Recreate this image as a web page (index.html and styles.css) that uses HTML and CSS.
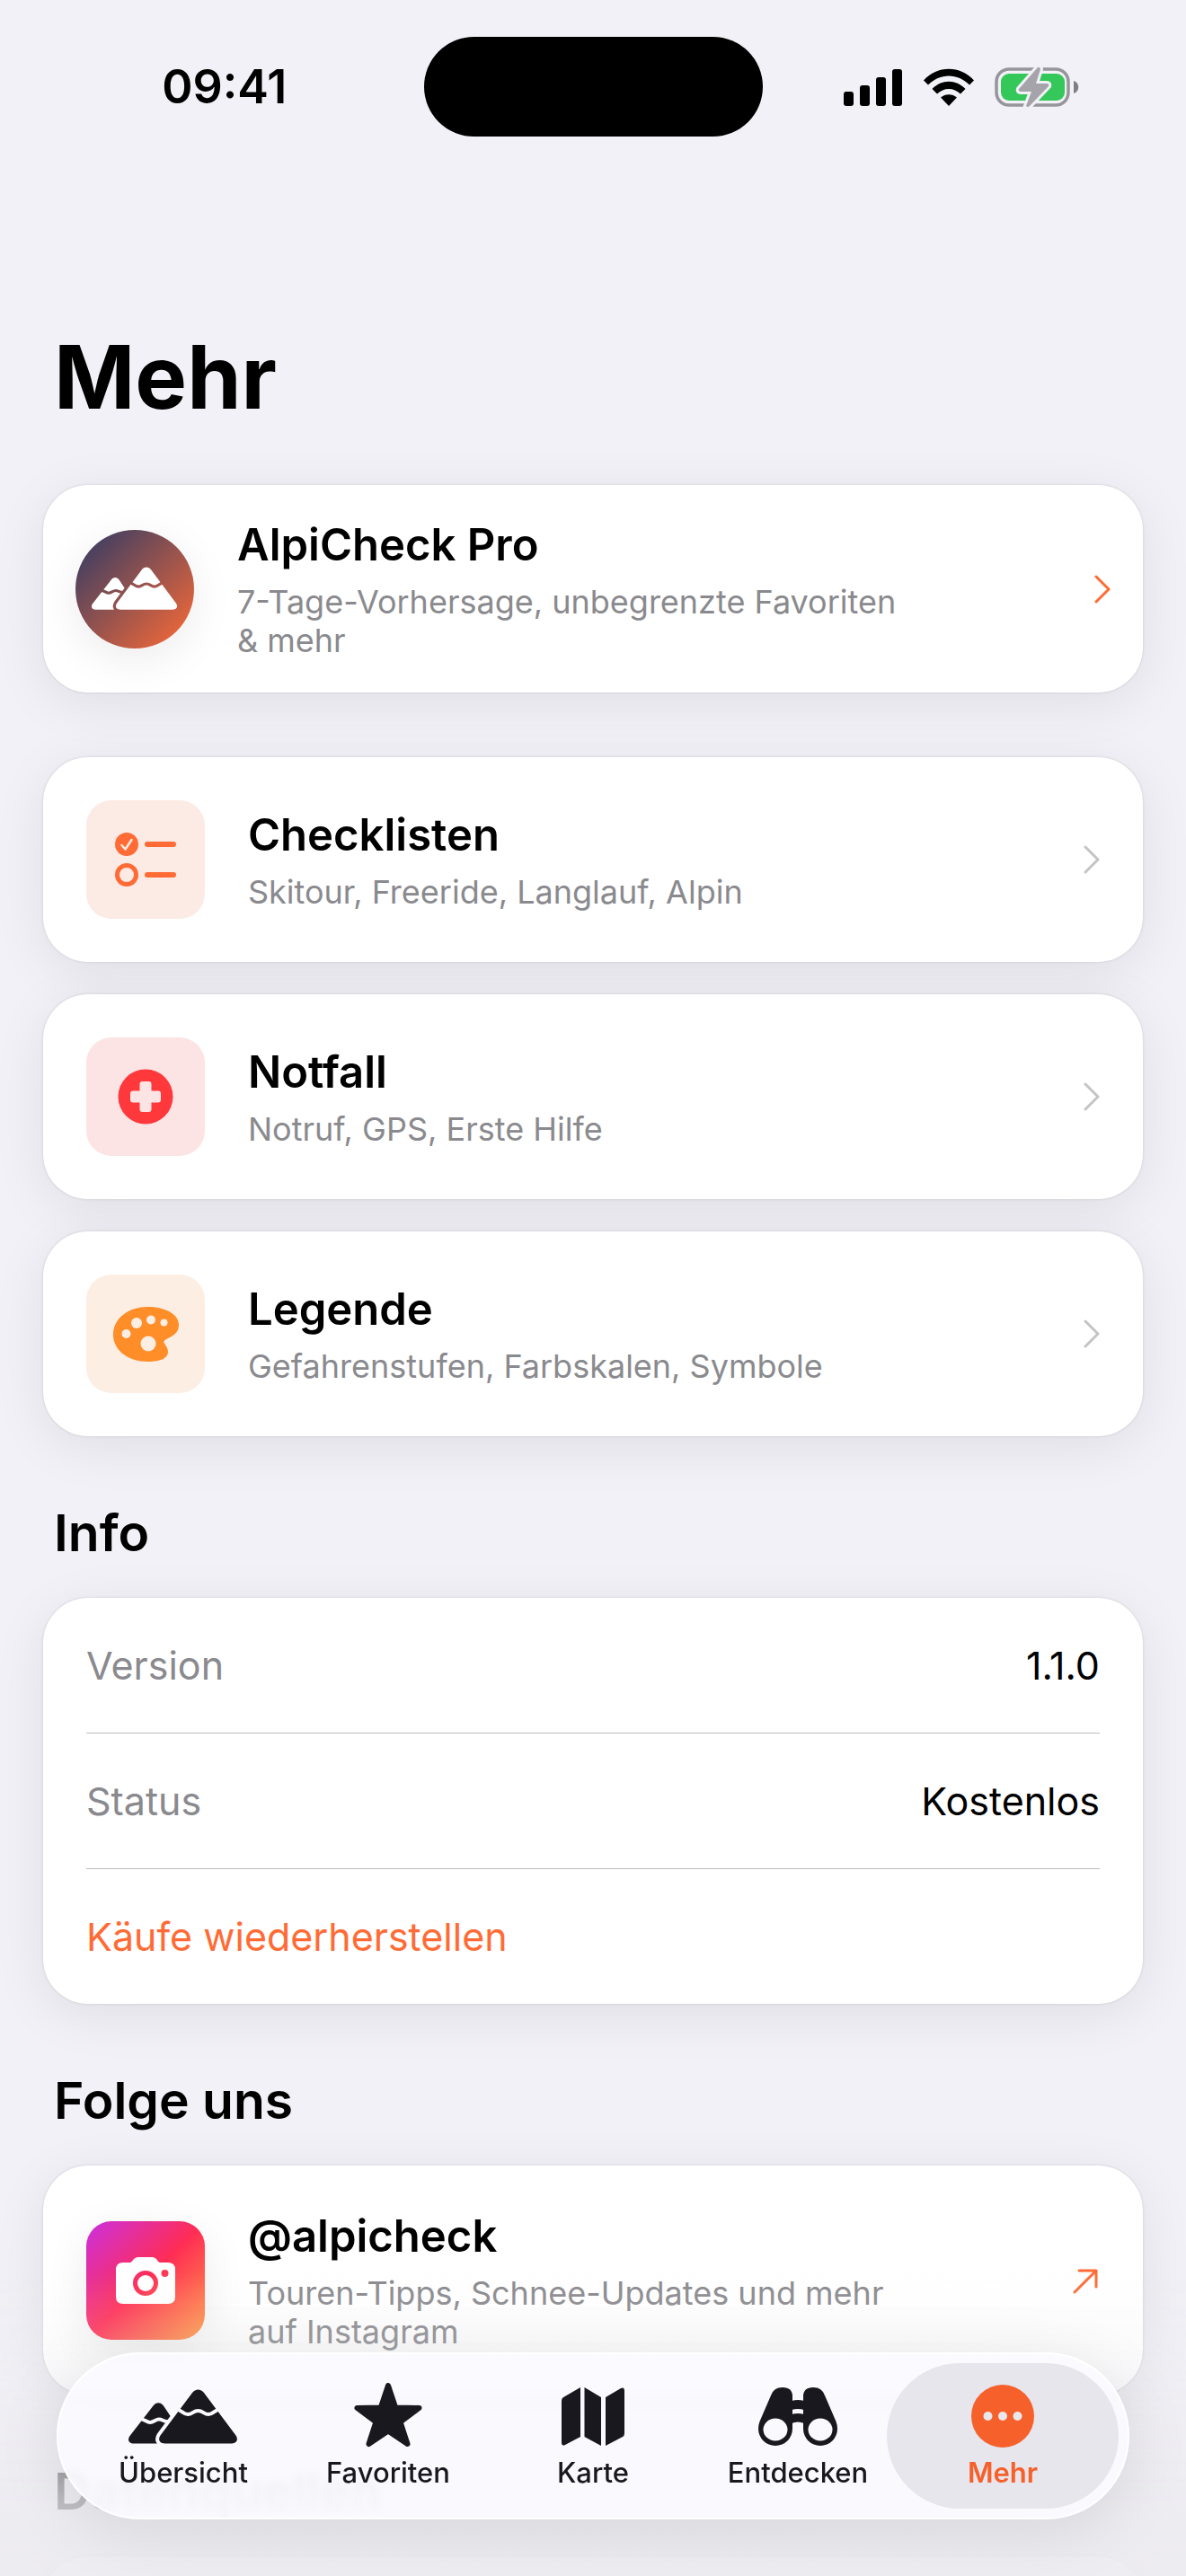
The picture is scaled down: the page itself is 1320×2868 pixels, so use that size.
FILE: index.html
```html
<!DOCTYPE html>
<html lang="de">
<head>
  <meta charset="UTF-8">
  <meta name="viewport" content="width=device-width, initial-scale=1.0">
  <title>AlpiCheck - Mehr</title>
  <link rel="stylesheet" href="styles.css">
</head>
<body>

  <!-- Mountain logo, used in the Pro card and in the tab bar -->
  <svg class="sprite" aria-hidden="true">
    <defs>
      <mask id="mask-back" maskUnits="userSpaceOnUse" x="-2" y="-2" width="128" height="68">
        <rect x="-2" y="-2" width="128" height="68" fill="#fff" />
        <path d="M71 4C74.5-.8 80.5-.8 84 4L119.5 51.5C122.5 56 120.5 60.5 115 60.5H40.5C34.5 60.5 32.5 56 35.5 51.5Z" fill="#000" stroke="#000" stroke-width="8" />
        <path d="M12 33C18 33 20 37 24 37S30 33.5 34 33.5S40 37 46 36" fill="none" stroke="#000" stroke-width="4" />
      </mask>
      <mask id="mask-front" maskUnits="userSpaceOnUse" x="-2" y="-2" width="128" height="68">
        <rect x="-2" y="-2" width="128" height="68" fill="#fff" />
        <path d="M53 22C59 23 61 28 66 28S72 24 77.5 24S84 28 89 28S96 23 102 22" fill="none" stroke="#000" stroke-width="4" />
      </mask>
      <symbol id="mountains" viewBox="0 0 122 62">
        <path mask="url(#mask-back)" d="M27.5 18.5C30.5 14 36 14 39 18.5L60 50V60.5H6C0 60.5-1.5 56 1.5 52Z" />
        <path mask="url(#mask-front)" d="M71 4C74.5-.8 80.5-.8 84 4L119.5 51.5C122.5 56 120.5 60.5 115 60.5H40.5C34.5 60.5 32.5 56 35.5 51.5Z" />
      </symbol>
      <symbol id="chevron" viewBox="0 0 18 32">
        <path d="M2 2L16 16L2 30" fill="none" stroke="currentColor" stroke-width="3" stroke-linecap="round" stroke-linejoin="round" />
      </symbol>
    </defs>
  </svg>

  <div class="screen">
    <header class="status-bar">
      <span class="time">09:41</span>
      <div class="island"></div>
      <div class="status-icons">
        <svg width="66" height="44" viewBox="0 0 66 44">
          <rect x="0" y="27" width="11" height="16" rx="3" />
          <rect x="18" y="20" width="11" height="23" rx="3" />
          <rect x="36" y="11" width="11" height="32" rx="3" />
          <rect x="54" y="2" width="11" height="41" rx="3" />
        </svg>
        <svg width="58" height="44" viewBox="0 0 58 44">
          <path d="M1 14.5C16-2.5 42-2.5 57 14.5L52 19.5C39 6 19 6 6 19.5Z" />
          <path d="M10.5 24C21 13 37 13 47.5 24L42 29.5C34.5 22 23.5 22 16 29.5Z" />
          <path d="M20 33.5C25 29 33 29 38 33.5L29 43Z" />
        </svg>
        <svg width="94" height="46" viewBox="0 0 94 46">
          <rect x="2" y="3" width="80" height="40" rx="14" fill="none" stroke="#96959b" stroke-width="3.5" />
          <rect x="7" y="8" width="71" height="30" rx="9" fill="#34c759" />
          <path d="M88 16C95 18 95 28 88 30Z" fill="#7f7e84" />
          <path d="M48 1L27 25Q26 28 29 28H41L35 44Q37 46 39 44L60 22Q61 19 58 19H46L51 3Q50 0 48 1Z" fill="#a5a4aa" stroke="#f2f1f7" stroke-width="6" paint-order="stroke" />
        </svg>
      </div>
    </header>

    <main class="content">
      <h1>Mehr</h1>

      <a class="card card-pro" href="#">
        <span class="icon icon-pro">
          <svg width="96" height="49" fill="#fff"><use href="#mountains" /></svg>
        </span>
        <span class="card-text">
          <span class="card-title">AlpiCheck Pro</span>
          <span class="card-sub">7-Tage-Vorhersage, unbegrenzte Favoriten &amp;&nbsp;mehr</span>
        </span>
        <svg class="chevron accent" width="18" height="32"><use href="#chevron" /></svg>
      </a>

      <div class="card-list">
        <a class="card" href="#">
          <span class="icon icon-checklist">
            <svg width="69" height="60" viewBox="0 0 69 60" fill="none" stroke-linecap="round" stroke-linejoin="round">
              <circle cx="13" cy="13" r="13" fill="#ff6b35" />
              <path d="M7.5 14L11.5 18.5L18.5 8" stroke="#fceae4" stroke-width="2.5" />
              <circle cx="13" cy="47" r="10.5" stroke="#ff6b35" stroke-width="5" />
              <path d="M36 13H65M36 47H65" stroke="#ff6b35" stroke-width="6" />
            </svg>
          </span>
          <span class="card-text">
            <span class="card-title">Checklisten</span>
            <span class="card-sub">Skitour, Freeride, Langlauf, Alpin</span>
          </span>
          <svg class="chevron" width="18" height="32"><use href="#chevron" /></svg>
        </a>

        <a class="card" href="#">
          <span class="icon icon-emergency">
            <svg width="62" height="62" viewBox="0 0 62 62">
              <circle cx="31" cy="31" r="30.5" fill="#ff383c" />
              <rect x="14" y="24.5" width="34" height="13" rx="3" fill="#fce4e5" />
              <rect x="24.5" y="14" width="13" height="34" rx="3" fill="#fce4e5" />
            </svg>
          </span>
          <span class="card-text">
            <span class="card-title">Notfall</span>
            <span class="card-sub">Notruf, GPS, Erste Hilfe</span>
          </span>
          <svg class="chevron" width="18" height="32"><use href="#chevron" /></svg>
        </a>

        <a class="card" href="#">
          <span class="icon icon-legend">
            <svg width="73" height="61" viewBox="0 0 73 61">
              <path d="M0 31C0 12 18 0 38 0C58 0 73 8 73 20C73 27 69 31 63 34C57 37 55 38 57.5 41.5C60 45 61 47 61 50C61 57 53 61 39 61C16 61 0 48 0 31Z" fill="#ff8d28" />
              <g fill="#fceee3">
                <circle cx="14.5" cy="30" r="5" />
                <circle cx="26" cy="18" r="6" />
                <circle cx="42" cy="14.5" r="5" />
                <circle cx="56.5" cy="17.5" r="4" />
                <circle cx="39" cy="41" r="8.5" />
              </g>
            </svg>
          </span>
          <span class="card-text">
            <span class="card-title">Legende</span>
            <span class="card-sub">Gefahrenstufen, Farbskalen, Symbole</span>
          </span>
          <svg class="chevron" width="18" height="32"><use href="#chevron" /></svg>
        </a>
      </div>

      <h2>Info</h2>
      <div class="info-card">
        <div class="info-row">
          <span class="info-label">Version</span>
          <span>1.1.0</span>
        </div>
        <div class="info-row">
          <span class="info-label">Status</span>
          <span>Kostenlos</span>
        </div>
        <button class="info-row restore" type="button">Käufe wiederherstellen</button>
      </div>

      <h2>Folge uns</h2>
      <a class="card" href="#">
        <span class="icon icon-instagram">
          <svg width="66" height="52" viewBox="0 0 66 52">
            <path fill="#fff" fill-rule="evenodd" d="M8 6H16C18 6 19 2 21.5 1Q23 0 25 0H40Q42 0 43.5 1C46 2 47 6 49 6H58Q66 6 66 14V44Q66 52 58 52H8Q0 52 0 44V14Q0 6 8 6ZM33 15A14 14 0 1 0 33 43A14 14 0 1 0 33 15ZM54.5 14A4 4 0 1 0 54.5 22A4 4 0 1 0 54.5 14Z" />
            <circle cx="33" cy="29" r="9" fill="#fff" />
          </svg>
        </span>
        <span class="card-text">
          <span class="card-title">@alpicheck</span>
          <span class="card-sub">Touren-Tipps, Schnee-Updates und mehr auf&nbsp;Instagram</span>
        </span>
        <svg class="arrow" width="30" height="30" viewBox="0 0 30 30">
          <path d="M2 28L26 4M7 4H26V22" fill="none" stroke="currentColor" stroke-width="3" stroke-linecap="round" stroke-linejoin="round" />
        </svg>
      </a>

      <h2>Datenquellen</h2>
      <div class="info-card">
        <div class="info-row"></div>
      </div>
    </main>
  </div>

  <div class="bottom-fade"></div>

  <nav class="tab-bar">
    <a class="tab" href="#">
      <svg width="122" height="72" viewBox="0 -7 122 72"><use href="#mountains" width="122" height="62" /></svg>
      <span>Übersicht</span>
    </a>
    <a class="tab" href="#">
      <svg width="76" height="72" viewBox="0 0 76 72">
        <path d="M38 3L46.2 27.5L72.5 27.9L51.5 43.5L59.5 68L38 53.5L16.5 68L24.5 43.5L3.5 27.9L29.8 27.5Z" stroke="currentColor" stroke-width="6" stroke-linejoin="round" />
      </svg>
      <span>Favoriten</span>
    </a>
    <a class="tab" href="#">
      <svg width="70" height="72" viewBox="0 -4 70 72">
        <path d="M21 1L2 12Q0 13 0 16V62Q0 67 4 65L21 56Z" />
        <path d="M25.5 1L44 12V66L25.5 56Z" />
        <path d="M49 12L66 2Q70 0 70 5V52Q70 55 68 56L49 66Z" />
      </svg>
      <span>Karte</span>
    </a>
    <a class="tab" href="#">
      <svg width="88" height="72" viewBox="0 -5 88 72" fill-rule="evenodd">
        <path d="M38 46A19 19 0 0 1 0 46Q0 42 1.5 38L14 9Q17 0 27 0Q38 0 38 10ZM32.5 47A13.5 12.5 0 1 0 5.5 47A13.5 12.5 0 1 0 32.5 47Z" />
        <path d="M50 46A19 19 0 0 0 88 46Q88 42 86.5 38L74 9Q71 0 61 0Q50 0 50 10ZM82.5 47A13.5 12.5 0 1 0 55.5 47A13.5 12.5 0 1 0 82.5 47Z" />
        <path d="M37 15Q44 13 51 15V25Q44 23 37 25ZM37 30Q44 28 51 30V40Q44 37 37 40Z" />
      </svg>
      <span>Entdecken</span>
    </a>
    <a class="tab active" href="#" aria-current="page">
      <svg width="70" height="72" viewBox="0 0 70 72">
        <circle cx="35" cy="37" r="35" />
        <g fill="#e9e8ed">
          <circle cx="18.5" cy="37" r="5" />
          <circle cx="35" cy="37" r="5" />
          <circle cx="51.5" cy="37" r="5" />
        </g>
      </svg>
      <span>Mehr</span>
    </a>
  </nav>

</body>
</html>
```

FILE: styles.css
```css
* {
  box-sizing: border-box;
}

body {
  margin: 0;
  font-family: Inter, "Liberation Sans", sans-serif;
  background-color: #f2f1f7;
  color: #000;
}

a {
  color: inherit;
  text-decoration: none;
}

svg {
  display: block;
  flex-shrink: 0;
}

.sprite {
  position: absolute;
  width: 0;
  height: 0;
}

.screen {
  height: 100vh;
  overflow-y: auto;
  scrollbar-width: none;
}

/* Status bar */
.status-bar {
  display: grid;
  grid-template-columns: 1fr auto 1fr;
  align-items: center;
  justify-items: center;
  padding: 41px 28px 34px;
}

.time {
  font-size: 52px;
  line-height: 60px;
  font-weight: 600;
}

.island {
  width: 377px;
  height: 111px;
  border-radius: 56px;
  background-color: #000;
}

.status-icons {
  display: flex;
  align-items: center;
  gap: 22px;
}

/* Content */
.content {
  padding: 174px 48px 240px;
}

h1 {
  margin: 0 12px 60px;
  font-size: 97px;
  line-height: 120px;
  font-weight: 700;
}

h2 {
  margin: 72px 12px 36px;
  font-size: 57px;
  line-height: 72px;
  font-weight: 600;
}

.card,
.info-card {
  background-color: #fff;
  border-radius: 50px;
  box-shadow: 0 0 3px rgba(0, 0, 0, 0.14), 0 12px 60px rgba(0, 0, 0, 0.08);
}

.card {
  display: flex;
  align-items: center;
  gap: 48px;
  padding: 48px;
}

.card-pro {
  padding: 36px;
  margin-bottom: 72px;
}

.card-list {
  display: flex;
  flex-direction: column;
  gap: 36px;
}

.card-text {
  flex: 1;
  display: flex;
  flex-direction: column;
  gap: 12px;
}

.card-title {
  font-size: 49px;
  line-height: 61px;
  font-weight: 600;
}

.card-sub {
  max-width: 780px;
  font-size: 36px;
  line-height: 43px;
  color: #8a8a8e;
}

.icon {
  display: flex;
  align-items: center;
  justify-content: center;
  width: 132px;
  height: 132px;
  border-radius: 28px;
}

.icon-pro {
  border-radius: 50%;
  background: linear-gradient(135deg, #2b3a67, #ff6b35);
  box-shadow: 0 12px 48px rgba(0, 0, 0, 0.08);
}

.icon-checklist {
  background-color: #fceae4;
}

.icon-emergency {
  background-color: #fce4e5;
}

.icon-legend {
  background-color: #fceee3;
}

.icon-instagram {
  background: linear-gradient(135deg, #cb30e0, #ff2d55 50%, #ff9d45);
  box-shadow: 0 12px 48px rgba(0, 0, 0, 0.08);
}

.chevron {
  color: #c4c4c6;
}

.accent,
.arrow {
  color: #ff6b35;
}

/* Info list */
.info-card {
  padding: 0 48px;
}

.info-row {
  box-sizing: content-box;
  display: flex;
  justify-content: space-between;
  align-items: center;
  width: 100%;
  height: 150px;
  font-size: 43px;
  line-height: 54px;
}

.info-row + .info-row {
  border-top: 1px solid #bcbcbf;
}

.info-label {
  color: #8a8a8e;
}

.info-row.restore {
  padding: 0;
  border-width: 1px 0 0;
  background: none;
  font-family: inherit;
  color: #ff6b35;
  cursor: pointer;
}

/* Tab bar */
.bottom-fade {
  position: fixed;
  left: 0;
  right: 0;
  bottom: 0;
  height: 340px;
  background: linear-gradient(rgba(236, 235, 240, 0), rgba(236, 235, 240, 0.2) 25%, rgba(236, 235, 240, 0.8) 75%, rgba(236, 235, 240, 0.9));
  pointer-events: none;
}

.tab-bar {
  position: fixed;
  left: 63px;
  right: 63px;
  bottom: 63px;
  display: flex;
  padding: 10px 25px;
  border: 2px solid #fff;
  border-radius: 93px;
  background-color: rgba(251, 250, 255, 0.88);
  backdrop-filter: blur(5px);
  box-shadow: 0 12px 72px rgba(0, 0, 0, 0.1);
}

/* The pill of a tab reaches over its neighbour */
.tab {
  flex: 1;
  display: flex;
  flex-direction: column;
  align-items: center;
  gap: 10px;
  margin: 0 -15px;
  padding: 22px 0;
  border-radius: 81px;
  font-size: 31px;
  line-height: 36px;
  font-weight: 500;
  color: #19181f;
  fill: currentColor;
}

.tab.active {
  background-color: #e7e6ec;
  color: #f6602b;
  font-weight: 600;
}
```
